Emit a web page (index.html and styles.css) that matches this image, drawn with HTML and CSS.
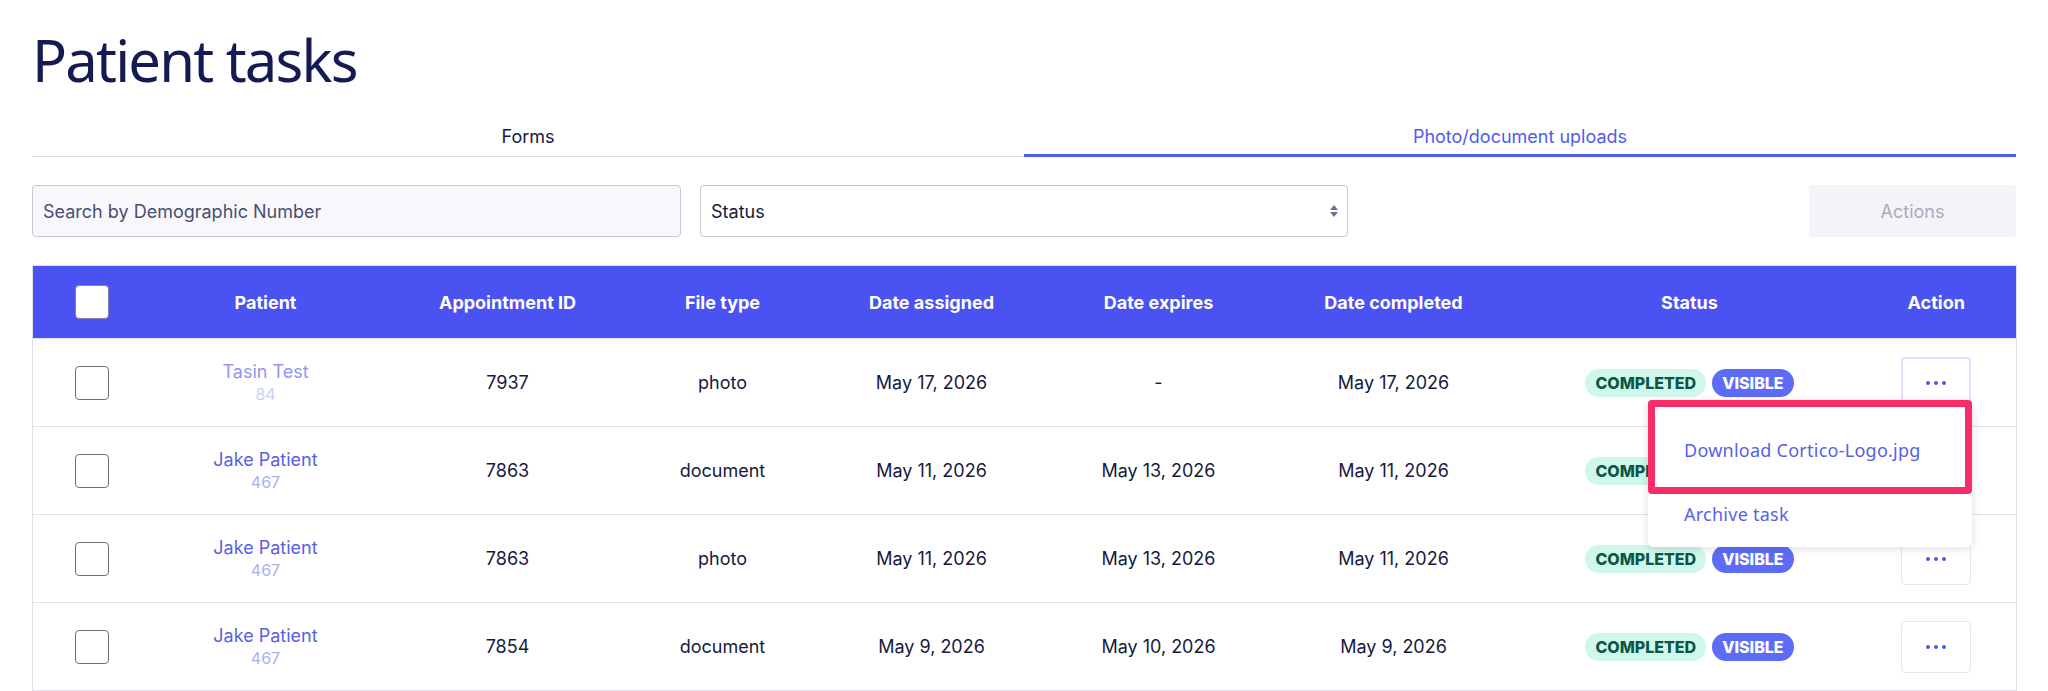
FILE: index.html
```html
<!DOCTYPE html>
<html lang="en">
<head>
    <meta charset="utf-8" />
    <meta name="viewport" content="width=device-width, initial-scale=1.0">
    <title>Patient tasks</title>
    <link rel="stylesheet" href="styles.css">
</head>
<body>
<div class="page">
    <h1 class="title">Patient tasks</h1>

    <nav class="tabs">
        <a class="tab">Forms</a>
        <a class="tab active">Photo/document uploads</a>
    </nav>

    <div class="filters">
        <input class="search" type="text" placeholder="Search by Demographic Number">
        <div class="select">
            <span>Status</span>
            <svg width="10" height="14" viewBox="0 0 10 14"><path d="M5 1 L9 6 L1 6 Z M5 13 L9 8 L1 8 Z" fill="#6d7190"/></svg>
        </div>
        <button class="actions">Actions</button>
    </div>

    <table class="tasks">
        <colgroup>
            <col style="width:118px"><col style="width:230px"><col style="width:254px">
            <col style="width:176px"><col style="width:242px"><col style="width:212px">
            <col style="width:258px"><col style="width:334px"><col style="width:160px">
        </colgroup>
        <thead>
            <tr>
                <th><span class="check head"></span></th>
                <th>Patient</th>
                <th>Appointment ID</th>
                <th>File type</th>
                <th>Date assigned</th>
                <th>Date expires</th>
                <th>Date completed</th>
                <th>Status</th>
                <th>Action</th>
            </tr>
        </thead>
        <tbody>
            <tr>
                <td><span class="check"></span></td>
                <td><div class="name faded">Tasin Test</div><div class="demo faded">84</div></td>
                <td>7937</td>
                <td>photo</td>
                <td>May 17, 2026</td>
                <td>-</td>
                <td>May 17, 2026</td>
                <td><span class="badge done">COMPLETED</span><span class="badge visible">VISIBLE</span></td>
                <td class="action">
                    <button class="more open"><svg width="22" height="6" viewBox="0 0 22 6"><circle cx="3" cy="3" r="2" fill="#4b55f2"/><circle cx="11" cy="3" r="2" fill="#4b55f2"/><circle cx="19" cy="3" r="2" fill="#4b55f2"/></svg></button>
                    <div class="menu">
                        <div class="item marked">Download Cortico-Logo.jpg</div>
                        <div class="item">Archive task</div>
                    </div>
                </td>
            </tr>
            <tr>
                <td><span class="check"></span></td>
                <td><div class="name">Jake Patient</div><div class="demo">467</div></td>
                <td>7863</td>
                <td>document</td>
                <td>May 11, 2026</td>
                <td>May 13, 2026</td>
                <td>May 11, 2026</td>
                <td><span class="badge done">COMPLETED</span><span class="badge visible">VISIBLE</span></td>
                <td class="action"><button class="more"><svg width="22" height="6" viewBox="0 0 22 6"><circle cx="3" cy="3" r="2" fill="#4b55f2"/><circle cx="11" cy="3" r="2" fill="#4b55f2"/><circle cx="19" cy="3" r="2" fill="#4b55f2"/></svg></button></td>
            </tr>
            <tr>
                <td><span class="check"></span></td>
                <td><div class="name">Jake Patient</div><div class="demo">467</div></td>
                <td>7863</td>
                <td>photo</td>
                <td>May 11, 2026</td>
                <td>May 13, 2026</td>
                <td>May 11, 2026</td>
                <td><span class="badge done">COMPLETED</span><span class="badge visible">VISIBLE</span></td>
                <td class="action"><button class="more"><svg width="22" height="6" viewBox="0 0 22 6"><circle cx="3" cy="3" r="2" fill="#4b55f2"/><circle cx="11" cy="3" r="2" fill="#4b55f2"/><circle cx="19" cy="3" r="2" fill="#4b55f2"/></svg></button></td>
            </tr>
            <tr>
                <td><span class="check"></span></td>
                <td><div class="name">Jake Patient</div><div class="demo">467</div></td>
                <td>7854</td>
                <td>document</td>
                <td>May 9, 2026</td>
                <td>May 10, 2026</td>
                <td>May 9, 2026</td>
                <td><span class="badge done">COMPLETED</span><span class="badge visible">VISIBLE</span></td>
                <td class="action"><button class="more"><svg width="22" height="6" viewBox="0 0 22 6"><circle cx="3" cy="3" r="2" fill="#4b55f2"/><circle cx="11" cy="3" r="2" fill="#4b55f2"/><circle cx="19" cy="3" r="2" fill="#4b55f2"/></svg></button></td>
            </tr>
        </tbody>
    </table>
</div>
</body>
</html>
```

FILE: styles.css
```css
body {
    margin: 0;
    background: #ffffff;
    font-family: Inter, "Liberation Sans", sans-serif;
    color: #161a3d;
}
.page {
    padding: 0 32px;
}
.title {
    margin: 25px 0 0 0;
    font-family: "Noto Sans", Inter, sans-serif;
    font-weight: 400;
    font-size: 58px;
    line-height: 70px;
    color: #141a52;
    letter-spacing: -1.8px;
}
.tabs {
    display: flex;
    margin-top: 23px;
    border-bottom: 1px solid #dcdde6;
}
.tab {
    flex: 1;
    text-align: center;
    font-size: 18px;
    line-height: 22px;
    padding: 8px 0 6px;
    border-bottom: 3px solid transparent;
    margin-bottom: -1px;
    color: #161a3d;
}
.tab.active {
    color: #4f5bef;
    border-bottom-color: #4f5bef;
}
.filters {
    display: flex;
    align-items: center;
    gap: 19px;
    margin-top: 28px;
}
.search {
    width: 649px;
    height: 52px;
    box-sizing: border-box;
    padding: 0 10px;
    border: 1px solid #c7c8d4;
    border-radius: 4px;
    background: #f8f8fc;
    font-family: Inter, sans-serif;
    font-size: 18px;
    color: #161a3d;
}
.search::placeholder {
    color: #4a4e70;
}
.select {
    width: 648px;
    height: 52px;
    box-sizing: border-box;
    display: flex;
    align-items: center;
    justify-content: space-between;
    padding: 0 8px 0 10px;
    border: 1px solid #c7c8d4;
    border-radius: 4px;
    font-size: 18px;
    color: #161a3d;
}
.actions {
    margin-left: auto;
    width: 207px;
    height: 52px;
    border: none;
    border-radius: 4px;
    background: #f3f3f8;
    color: #a9abbd;
    font-family: Inter, sans-serif;
    font-size: 18px;
}
.tasks {
    width: 100%;
    margin-top: 28px;
    border-collapse: collapse;
    table-layout: fixed;
    border: 1px solid #e0e1e8;
}
.tasks th {
    background: #4a52f2;
    color: #ffffff;
    font-size: 18px;
    font-weight: 700;
    height: 72px;
    padding: 0;
    text-align: center;
}
.tasks td {
    height: 87px;
    padding: 0;
    text-align: center;
    font-size: 18px;
    border-top: 1px solid #e1e2e8;
}
.check {
    display: inline-block;
    width: 34px;
    height: 34px;
    box-sizing: border-box;
    border: 1px solid #707070;
    border-radius: 4px;
    background: #ffffff;
    vertical-align: middle;
}
.check.head {
    border-color: #7c7fae;
}
.name {
    font-size: 18px;
    line-height: 22px;
    color: #5761e8;
}
.demo {
    font-size: 16px;
    line-height: 22px;
    color: #aab0f2;
}
.name.faded {
    color: #8f97f3;
}
.demo.faded {
    color: #cbcffa;
}
.badge {
    display: inline-block;
    height: 28px;
    line-height: 28px;
    padding: 0 10px;
    border-radius: 14px;
    font-size: 16px;
    font-weight: 800;
    vertical-align: middle;
}
.badge.done {
    background: #cff8ea;
    color: #0c5646;
}
.badge.visible {
    margin-left: 6px;
    background: #5c6cf6;
    color: #ffffff;
}
.action {
    position: relative;
}
.more {
    width: 70px;
    height: 52px;
    border: 1px solid #e6e7f0;
    border-radius: 4px;
    background: #ffffff;
    display: inline-flex;
    align-items: center;
    justify-content: center;
    vertical-align: middle;
}
.more.open {
    border: 2px solid #dfe2fb;
}
.menu {
    position: absolute;
    top: 61px;
    right: 44px;
    width: 324px;
    background: #ffffff;
    border-radius: 5px;
    box-shadow: 0 2px 8px rgba(20, 20, 60, 0.14);
    text-align: left;
    z-index: 2;
}
.item {
    font-family: "Noto Sans", Inter, sans-serif;
    font-size: 18px;
    line-height: 22px;
    letter-spacing: 0.25px;
    color: #5761e8;
    padding: 9px 0 22px 36px;
}
.item.marked {
    border: 7px solid #f72d68;
    border-radius: 4px;
    padding: 32px 0 26px 29px;
}
```
